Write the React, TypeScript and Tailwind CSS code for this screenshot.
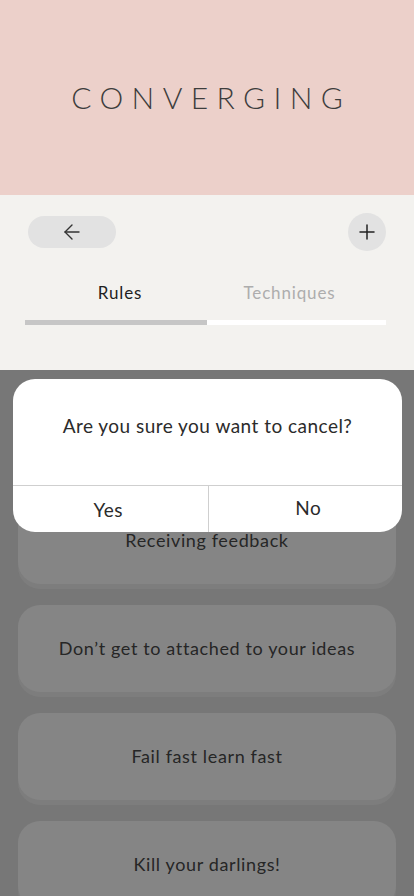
import { ArrowLeft, Plus } from "lucide-react";

const RULES = [
  "",
  "Receiving feedback",
  "Don\u2019t get to attached to your ideas",
  "Fail fast learn fast",
  "Kill your darlings!",
];

function RuleCard({ text }: { text: string }) {
  return (
    <div className="h-[87px] shrink-0 rounded-[22px] bg-[#858585] shadow-[0_5px_0_#7d7d7d] flex items-center justify-center">
      {text && (
        <span className="text-[18px] tracking-[0.035em] text-[#262626]">{text}</span>
      )}
    </div>
  );
}

export default function App() {
  return (
    <div
      className="w-full h-[896px] overflow-hidden flex flex-col"
      style={{ fontFamily: "Lato, 'Open Sans', sans-serif" }}
    >
      {/* header */}
      <div className="h-[195px] shrink-0 bg-[#ECD0CA] flex items-center justify-center">
        <h1 className="text-[30px] font-light tracking-[0.28em] pl-[0.28em] text-[#3d3d3d]">
          CONVERGING
        </h1>
      </div>

      {/* nav + tabs */}
      <div className="h-[175px] shrink-0 bg-[#F3F2EF] pl-[25px] pr-[28px] pt-[18px]">
        <div className="flex items-center justify-between pl-[3px]">
          <button className="w-[88px] h-[32px] rounded-full bg-[#E2E2E2] flex items-center justify-center text-[#333]">
            <ArrowLeft size={24} strokeWidth={1.4} />
          </button>
          <button className="w-[38px] h-[38px] rounded-full bg-[#E2E2E2] flex items-center justify-center text-[#222]">
            <Plus size={24} strokeWidth={1.5} />
          </button>
        </div>
        <div className="flex mt-[30px]">
          <div className="w-[182px] flex flex-col">
            <span className="text-center text-[17px] tracking-[0.05em] text-[#1f1f1f] h-[24px] leading-[24px] pl-[8px]">
              Rules
            </span>
            <div className="mt-[15px] h-[5px] bg-[#C6C6C6]" />
          </div>
          <div className="flex-1 flex flex-col">
            <span className="text-center text-[17px] tracking-[0.05em] text-[#ADADAD] h-[24px] leading-[24px] pr-[14px]">
              Techniques
            </span>
            <div className="mt-[15px] h-[5px] bg-white" />
          </div>
        </div>
      </div>

      {/* dimmed list with dialog */}
      <div className="relative flex-1 bg-[#777777] overflow-hidden">
        <div className="flex flex-col gap-[21px] px-[18px] pt-[19px]">
          {RULES.map((r, i) => (
            <RuleCard key={i} text={r} />
          ))}
        </div>

        <div className="absolute left-[13px] right-[12px] top-[9px] h-[153px] rounded-[22px] bg-white flex flex-col overflow-hidden">
          <div className="h-[106px] flex items-center justify-center pb-[11px]">
            <span className="text-[19px] tracking-[0.025em] text-[#2b2b2b]">
              Are you sure you want to cancel?
            </span>
          </div>
          <div className="flex-1 grid grid-cols-2 border-t border-[#CFCFCF]">
            <button className="flex items-center justify-center pt-[3px] pr-[4px] text-[19px] tracking-[0.03em] text-[#2b2b2b]">
              Yes
            </button>
            <button className="flex items-center justify-center pb-[2px] pl-[6px] border-l border-[#CFCFCF] text-[19px] tracking-[0.03em] text-[#2b2b2b]">
              No
            </button>
          </div>
        </div>
      </div>
    </div>
  );
}
